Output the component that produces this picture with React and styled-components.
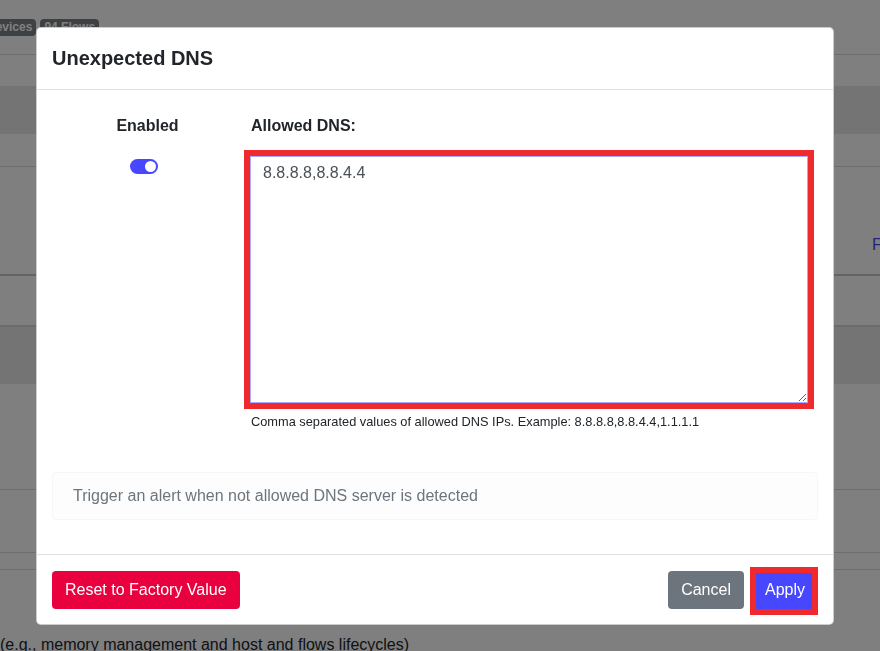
import React from "react"
import styled, { createGlobalStyle } from "styled-components"

const GlobalStyle = createGlobalStyle`
  html, body {
    margin: 0;
    padding: 0;
  }
  body {
    font-family: "Liberation Sans", Arial, sans-serif;
    color: #212529;
    background: #fff;
    overflow: hidden;
  }
  * {
    box-sizing: border-box;
  }
`

const App = () => {
  return (
    <>
      <GlobalStyle />
      <Page>
        <TopBar>
          <Badge>Devices</Badge>
          <Badge>94 Flows</Badge>
        </TopBar>
        <Row h={31} />
        <Row h={48} band />
        <Row h={33} line />
        <Row h={109} strong>
          <LinkText>Flows</LinkText>
        </Row>
        <Row h={49} />
        <Row h={59} band topline />
        <Row h={106} line />
        <Row h={63} line />
        <Row h={17} line />
        <Note>(e.g., memory management and host and flows lifecycles)</Note>
      </Page>

      <Backdrop>
        <Dialog>
          <Header>
            <Title>Unexpected DNS</Title>
          </Header>
          <Body>
            <Settings>
              <SwitchCol>
                <Label>Enabled</Label>
                <Switch>
                  <Knob />
                </Switch>
              </SwitchCol>
              <FieldCol>
                <Label>Allowed DNS:</Label>
                <DnsInput defaultValue="8.8.8.8,8.8.4.4" />
                <Help>
                  Comma separated values of allowed DNS IPs. Example:
                  8.8.8.8,8.8.4.4,1.1.1.1
                </Help>
              </FieldCol>
            </Settings>
            <Description>
              Trigger an alert when not allowed DNS server is detected
            </Description>
          </Body>
          <Footer>
            <Button tone="#e9003f">Reset to Factory Value</Button>
            <Actions>
              <Button tone="#6c757d">Cancel</Button>
              <Button tone="#4747ff" marked>
                Apply
              </Button>
            </Actions>
          </Footer>
        </Dialog>
      </Backdrop>
    </>
  )
}

export default App

const Page = styled.div`
  width: 880px;
  height: 651px;
  overflow: hidden;
  background: #fff;
`

const TopBar = styled.div`
  height: 55px;
  padding-top: 19px;
  margin-left: -17px;
  display: flex;
  gap: 4px;
  border-bottom: 1px solid #dcdcdc;
`

const Badge = styled.span`
  height: 17px;
  padding: 0 4px;
  border-radius: 4px;
  background: #7a8288;
  color: #fff;
  font-size: 12px;
  font-weight: 700;
  line-height: 17px;
`

const Row = styled.div`
  height: ${(p) => p.h}px;
  background: ${(p) => (p.band ? "#e8e8e8" : "#fff")};
  border-top: ${(p) => (p.topline ? "2px solid #d6d6d6" : "none")};
  border-bottom: ${(p) =>
    p.strong ? "2px solid #c8c8c8" : p.line ? "1px solid #dcdcdc" : "none"};
  display: flex;
  align-items: center;
  white-space: nowrap;
`

const LinkText = styled.span`
  margin: 48px 0 0 872px;
  color: #4747ff;
  font-size: 16px;
`

const Note = styled.p`
  margin: 66px 0 0 0;
  font-size: 16px;
  color: #212529;
  white-space: nowrap;
`

const Backdrop = styled.div`
  position: fixed;
  inset: 0;
  background: rgba(0, 0, 0, 0.5);
  padding: 27px 0 0 36px;
`

const Dialog = styled.div`
  width: 798px;
  background: #fff;
  border: 1px solid rgba(0, 0, 0, 0.2);
  border-radius: 5px;
`

const Header = styled.div`
  padding: 15px 15px 16px;
  border-bottom: 1px solid #dee2e6;
`

const Title = styled.h5`
  margin: 0;
  font-size: 20px;
  font-weight: 700;
  line-height: 30px;
  color: #212529;
`

const Body = styled.div`
  padding: 24px 15px 34px;
`

const Settings = styled.div`
  display: grid;
  grid-template-columns: 191px 1fr;
`

const SwitchCol = styled.div`
  display: flex;
  flex-direction: column;
  align-items: center;
`

const FieldCol = styled.div`
  padding-left: 8px;
  display: flex;
  flex-direction: column;
`

const Label = styled.label`
  font-size: 16px;
  font-weight: 700;
  line-height: 24px;
`

const Switch = styled.span`
  margin: 21px 8px 0 0;
  width: 28px;
  height: 15px;
  border-radius: 8px;
  background: #4747ff;
  display: flex;
  align-items: center;
  justify-content: flex-end;
  padding-right: 2px;
`

const Knob = styled.span`
  width: 11px;
  height: 11px;
  border-radius: 50%;
  background: #fff;
`

const DnsInput = styled.textarea`
  margin: 18px 0 0 -1px;
  width: 558px;
  height: 247px;
  padding: 4px 12px;
  border: 1px solid #a9a9ff;
  border-radius: 0;
  outline: 6px solid #ef2a2e;
  font-family: "Liberation Sans", Arial, sans-serif;
  font-size: 16px;
  line-height: 24px;
  color: #495057;
  resize: vertical;
`

const Help = styled.small`
  margin-top: 10px;
  font-size: 12.8px;
  line-height: 18px;
  color: #212529;
`

const Description = styled.div`
  margin-top: 41px;
  height: 48px;
  padding: 0 20px;
  display: flex;
  align-items: center;
  background: #fdfdfd;
  border: 1px solid #f6f6f6;
  border-radius: 4px;
  color: #6c757d;
  font-size: 16px;
`

const Footer = styled.div`
  padding: 16px 15px 15px;
  border-top: 1px solid #dee2e6;
  display: flex;
  justify-content: space-between;
  align-items: center;
`

const Actions = styled.div`
  display: flex;
  gap: 8px;
`

const Button = styled.button`
  position: relative;
  height: 38px;
  padding: 0 13px;
  border: none;
  border-radius: 4px;
  background: ${(p) => p.tone};
  color: #fff;
  font-family: "Liberation Sans", Arial, sans-serif;
  font-size: 16px;
  line-height: 24px;

  &::after {
    content: "";
    display: ${(p) => (p.marked ? "block" : "none")};
    position: absolute;
    top: -4px;
    left: -2px;
    right: 0;
    bottom: -6px;
    border: 6px solid #ef2a2e;
  }
`
